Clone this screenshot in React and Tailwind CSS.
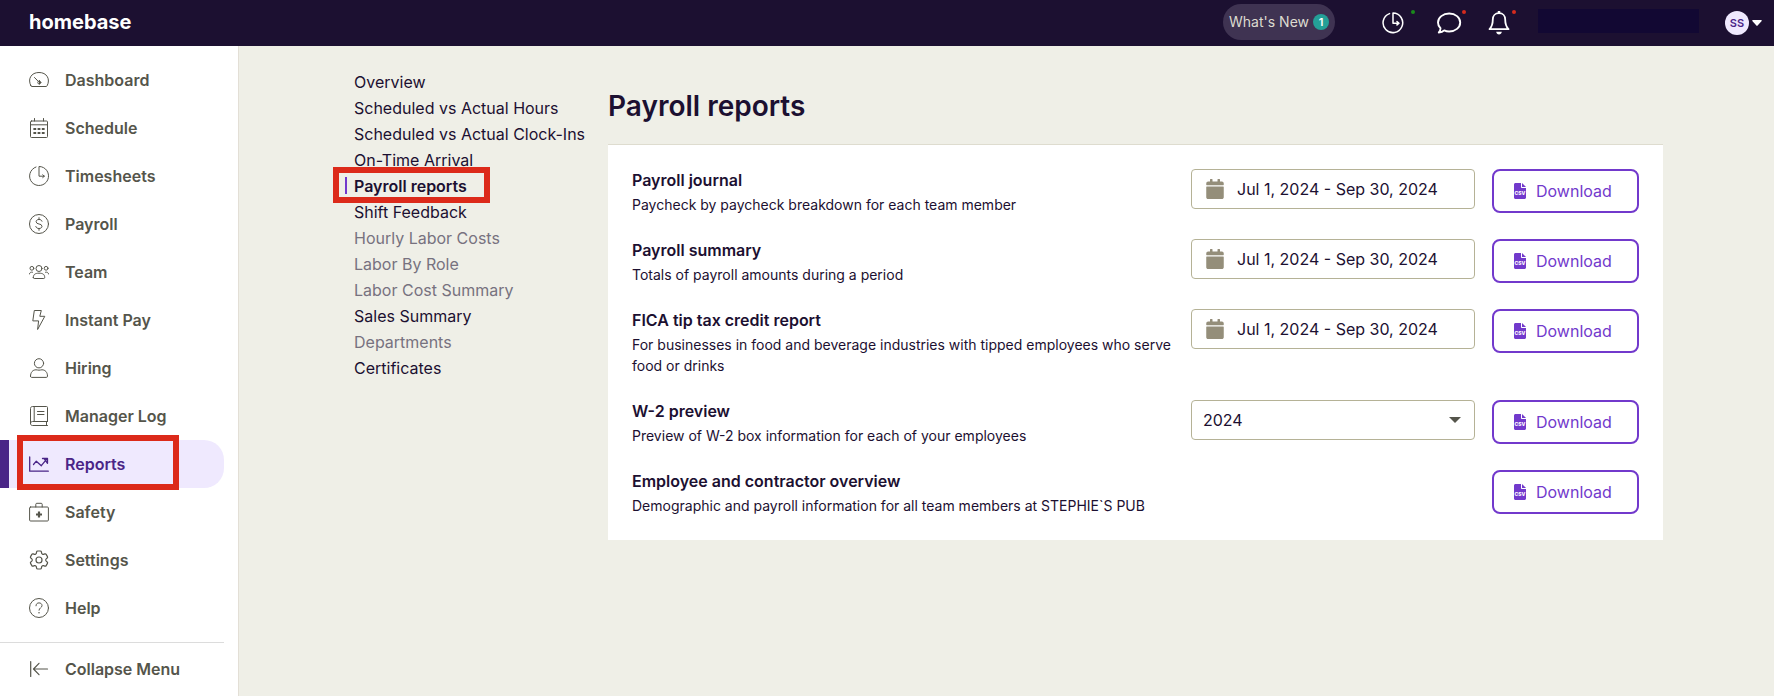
import { useState } from 'react'
import { FaCalendar } from 'react-icons/fa'
import { HiOutlineCog6Tooth } from 'react-icons/hi2'

const svgProps = {
  viewBox: '0 0 20 20',
  fill: 'none',
  stroke: 'currentColor',
  strokeWidth: 1,
  strokeLinecap: 'round',
  strokeLinejoin: 'round',
  'aria-hidden': true,
  className: 'w-5 h-5 shrink-0',
}

const Icons = {
  dashboard: (
    <svg {...svgProps}>
      <path d="M1.9 15.8C.2 12.6.2 9.200 1.600 6.800 3.200 3.900 6.300 2.500 10 2.500s6.800 1.400 8.400 4.300c1.400 2.400 1.400 5.800-.3 9-.3.5-.6.7-1.100.7H3c-.5 0-.8-.2-1.100-.7Z" />
      <circle cx="10.300" cy="12.500" r="1.500" />
      <path d="M5.500 7.500 9.300 11.400M10.500 14v-3.500" />
    </svg>
  ),
  schedule: (
    <svg {...svgProps}>
      <rect x="1.500" y="3" width="17" height="16.500" rx="1" />
      <path d="M1.500 6.800h17M5.500.5V3M14.500.5V3" />
      <path d="M5.500 11h.6M9.700 11h.6M13.900 11h.6M5.500 15h.6M9.700 15h.6M13.900 15h.6" strokeWidth="2.200" strokeLinecap="square" />
    </svg>
  ),
  timesheets: (
    <svg {...svgProps}>
      <path d="M7 1a9.500 9.500 0 1 0 3-.5v9.700h5.200M13.700 8.800l1.700 1.400-1.700 1.400" />
    </svg>
  ),
  payroll: (
    <svg {...svgProps}>
      <circle cx="10" cy="10" r="9.500" />
      <path d="M13 7.200C12.700 6 11.500 5.500 10 5.500c-1.700 0-2.900.8-2.900 2.200C7.100 11 13 9 13 12.300c0 1.400-1.300 2.200-3 2.200s-2.900-.8-3.200-2M10 3.700v1.800M10 14.500v1.800" />
    </svg>
  ),
  team: (
    <svg {...svgProps}>
      <circle cx="10" cy="6.500" r="3" />
      <circle cx="2.900" cy="6.300" r="1.900" />
      <circle cx="17.100" cy="6.300" r="1.900" />
      <path d="M4.300 15.500c0-3 1.700-4.300 5.700-4.300s5.700 1.300 5.700 4.300c0 .6-.3 1-.9 1H5.200c-.6 0-.9-.4-.9-1ZM.4 12c.2-1.600 1.500-2.100 3.100-1.800M19.600 12c-.2-1.600-1.500-2.100-3.100-1.800" />
    </svg>
  ),
  instantPay: (
    <svg {...svgProps}>
      <path d="M5.700.5h6.600l-1.500 5.800h5L8.600 19.500l1-8.600H4.200Z" />
    </svg>
  ),
  hiring: (
    <svg {...svgProps}>
      <circle cx="10" cy="5.300" r="4.600" />
      <path d="M1.500 18.200c0-4 2.300-6.400 5.500-6.400 1.200 0 1.800.4 3 .4s1.800-.4 3-.4c3.200 0 5.500 2.400 5.500 6.400 0 .8-.4 1.200-1.200 1.200H2.700c-.8 0-1.200-.4-1.200-1.200Z" />
    </svg>
  ),
  managerLog: (
    <svg {...svgProps}>
      <path d="M18.500 15.500V1.500c0-.6-.3-1-.9-1H3.500c-1.200 0-2 .8-2 2v15c0 1.200.8 2 2 2h15M18.500 15.500h-15c-1.200 0-2 .8-2 2M5.200.5v15M17.500 15.500v4M8.500 5.500H15M8.500 8.500H15" />
    </svg>
  ),
  reports: (
    <svg {...svgProps} strokeWidth="1.300">
      <path d="M.7 3v14.200h18.600" />
      <path d="M4.500 10.500 7.300 7.200l5 4.500 5.400-6.500M13.500 4.500h5v4.800l-3-4.200" />
    </svg>
  ),
  safety: (
    <svg {...svgProps}>
      <rect x=".6" y="5" width="18.800" height="14" rx="1" />
      <path d="M6.800 5V2.300c0-.6.4-1 1-1h4.400c.6 0 1 .4 1 1V5" />
      <path d="M10 9.500v6M7 12.500h6" strokeWidth="2.200" strokeLinecap="butt" />
    </svg>
  ),
  settings: <HiOutlineCog6Tooth strokeWidth="1.2" viewBox="2 2 20 20" className="w-5 h-5 shrink-0" />,
  help: (
    <svg {...svgProps}>
      <circle cx="10" cy="10" r="9.500" />
      <path d="M7 7.800c0-1.800 1.200-2.900 3-2.900s3 1.100 3 2.700c0 2.200-3 2.200-3 4.600" />
      <path d="M10 14.700v.1" strokeWidth="1.500" />
    </svg>
  ),
  collapse: (
    <svg {...svgProps} strokeWidth="1.200">
      <path d="M1.700 2.500v15M18.500 10H4.500M10 4.300 4.500 10l5.500 5.700" />
    </svg>
  ),
  csv: (
    <svg viewBox="0 0 12 16" fill="currentColor" aria-hidden="true" className="w-3 h-4 shrink-0">
      <path d="M1.500 0H7v4.200c0 .5.300.8.800.8H12v9.500c0 .8-.7 1.500-1.500 1.500h-9C.7 16 0 15.300 0 14.500v-13C0 .7.700 0 1.500 0ZM8 0l4 4H8Z" />
      <text x="6" y="11.500" textAnchor="middle" fontSize="5" fontWeight="800" fill="#fff">CSV</text>
    </svg>
  ),
}

const sidebarItems = [
  { label: 'Dashboard', icon: Icons.dashboard },
  { label: 'Schedule', icon: Icons.schedule },
  { label: 'Timesheets', icon: Icons.timesheets },
  { label: 'Payroll', icon: Icons.payroll },
  { label: 'Team', icon: Icons.team },
  { label: 'Instant Pay', icon: Icons.instantPay },
  { label: 'Hiring', icon: Icons.hiring },
  { label: 'Manager Log', icon: Icons.managerLog },
  { label: 'Reports', icon: Icons.reports, active: true },
  { label: 'Safety', icon: Icons.safety },
  { label: 'Settings', icon: Icons.settings },
  { label: 'Help', icon: Icons.help },
]

const reportLinks = [
  { label: 'Overview' },
  { label: 'Scheduled vs Actual Hours' },
  { label: 'Scheduled vs Actual Clock-Ins' },
  { label: 'On-Time Arrival' },
  { label: 'Payroll reports', active: true },
  { label: 'Shift Feedback' },
  { label: 'Hourly Labor Costs', locked: true },
  { label: 'Labor By Role', locked: true },
  { label: 'Labor Cost Summary', locked: true },
  { label: 'Sales Summary' },
  { label: 'Departments', locked: true },
  { label: 'Certificates' },
]

const reports = [
  {
    title: 'Payroll journal',
    text: 'Paycheck by paycheck breakdown for each team member',
    field: 'range',
  },
  {
    title: 'Payroll summary',
    text: 'Totals of payroll amounts during a period',
    field: 'range',
  },
  {
    title: 'FICA tip tax credit report',
    text: 'For businesses in food and beverage industries with tipped employees who serve food or drinks',
    field: 'range',
  },
  {
    title: 'W-2 preview',
    text: 'Preview of W-2 box information for each of your employees',
    field: 'year',
  },
  {
    title: 'Employee and contractor overview',
    text: 'Demographic and payroll information for all team members at STEPHIE`S PUB',
  },
]

function Header() {
  return (
    <header className="flex items-center h-[46px] pl-[29px] pr-3 bg-[#1c1031] text-white">
      <a href="#" className="pb-[2px] text-xl leading-6 font-bold">homebase</a>
      <button type="button" className="flex items-center gap-1 h-9 ml-auto mb-[2px] px-[6px] rounded-full bg-[#3f3352] text-sm text-[#dddbd0]">
        What's New
        <span className="w-4 h-4 rounded-full bg-[#24a097] text-white text-[11px] leading-4 font-semibold">1</span>
      </button>
      <div className="flex items-center gap-8 ml-[47px]">
        <button type="button" aria-label="Time clock" className="relative">
          <svg viewBox="0 0 22 22" fill="none" stroke="currentColor" strokeWidth="1.500" strokeLinecap="round" strokeLinejoin="round" className="w-[22px] h-[22px]">
            <path d="M7.500 1.600A9.800 9.800 0 1 0 11 1v10.200h5.800M15 9.500l2 1.700-2 1.700" />
          </svg>
          <span className="absolute -top-[2px] -right-[11px] w-1 h-1 rounded-full bg-[#1a8a1c]" />
        </button>
        <button type="button" aria-label="Messages" className="relative">
          <svg viewBox="0 0 26 24" fill="none" stroke="currentColor" strokeWidth="1.900" strokeLinecap="round" strokeLinejoin="round" className="w-[26px] h-6">
            <path d="M4.500 17.300C2.800 15.700 2 13.700 2 11.500 2 6.500 7 2.500 13.200 2.500s11 4 11 9-4.800 9-11 9c-1.900 0-3.500-.4-5-1.100-1.400 1.400-3.200 2-5.400 2.100 1-1 1.700-2.500 1.700-4.200Z" />
          </svg>
          <span className="absolute -top-px -right-1 w-1 h-1 rounded-full bg-[#d52b1e]" />
        </button>
        <button type="button" aria-label="Notifications" className="relative -ml-[6px]">
          <svg viewBox="0 0 22 24" fill="none" stroke="currentColor" strokeWidth="1.800" strokeLinejoin="round" className="w-[22px] h-6">
            <path d="M11 2.200c-4 0-6.200 2.800-6.200 6.300 0 5-.8 7-3.300 9.700h19c-2.500-2.700-3.300-4.700-3.300-9.700 0-3.500-2.200-6.300-6.200-6.300Z" />
            <path d="M11 0v2.500" strokeWidth="2.500" />
            <path d="M8.200 20.800h5.600c-.3 1.700-1.300 2.700-2.800 2.700s-2.500-1-2.800-2.700Z" fill="currentColor" stroke="none" />
          </svg>
          <span className="absolute -top-px -right-[6px] w-1 h-1 rounded-full bg-[#d52b1e]" />
        </button>
      </div>
      <div className="w-[161px] h-6 ml-7 mb-1 bg-[#120833]" />
      <button type="button" className="flex items-center gap-[3px] ml-[26px]">
        <span className="w-6 h-6 rounded-full bg-[#efe9fe] text-[#4a2587] text-[11px] leading-6 font-semibold">SS</span>
        <svg viewBox="0 0 10 6" fill="currentColor" aria-hidden="true" className="w-[10px] h-[6px]">
          <path d="M1 0h8c.7 0 1 .7.5 1.200L5.600 5.600c-.3.4-.9.4-1.200 0L.5 1.200C0 .7.300 0 1 0Z" />
        </svg>
      </button>
    </header>
  )
}

function Sidebar() {
  return (
    <aside className="flex flex-col w-[239px] shrink-0 pt-[10px] pr-[14px] bg-white border-r border-[#e3dfd6] text-[#55554b] font-semibold">
      <nav>
        <ul>
          {sidebarItems.map(({ label, icon, active }) => (
            <li key={label} className="relative">
              <a
                href="#"
                className={
                  active
                    ? 'flex items-center gap-4 h-12 pl-5 border-l-[9px] border-[#4a2587] rounded-r-[20px] bg-[#efe9fe] text-[#4a2587]'
                    : 'flex items-center gap-4 h-12 pl-[29px]'
                }
              >
                {icon}
                {label}
              </a>
              {active && (
                <span className="absolute left-[17px] -top-[5px] w-[162px] h-[55px] border-[6px] border-[#dc2a1a] pointer-events-none" />
              )}
            </li>
          ))}
        </ul>
      </nav>
      <button type="button" className="flex items-center gap-4 h-[52px] mt-[10px] pl-[29px] border-t border-[#dcdcdc]">
        {Icons.collapse}
        Collapse Menu
      </button>
    </aside>
  )
}

function ReportNav() {
  return (
    <nav className="w-[263px] shrink-0 pt-[23px]">
      <ul>
        {reportLinks.map(({ label, active, locked }) => (
          <li key={label} className="relative leading-[26px]">
            <a href="#" className={active ? 'block pl-[9px] font-semibold' : locked ? 'block pl-[9px] text-[#77727f]' : 'block pl-[9px]'}>
              {label}
            </a>
            {active && (
              <>
                <span className="absolute left-0 top-1 w-[2px] h-[17px] bg-[#7239cc]" />
                <span className="absolute -left-3 -top-[6px] w-[157px] h-9 border-[6px] border-[#dc2a1a] pointer-events-none" />
              </>
            )}
          </li>
        ))}
      </ul>
    </nav>
  )
}

function DateRangeField({ label }) {
  const [value, setValue] = useState('Jul 1, 2024 - Sep 30, 2024')

  return (
    <div className="relative w-[284px] shrink-0">
      <FaCalendar className="absolute left-[15px] top-[10px] w-[18px] h-5 text-[#948e7a]" />
      <input
        type="text"
        aria-label={`${label} dates`}
        value={value}
        onChange={(e) => setValue(e.target.value)}
        className="block w-full h-10 pl-[45px] pr-3 border border-[#b5b296] rounded bg-transparent"
      />
    </div>
  )
}

function YearField({ label }) {
  return (
    <div className="relative w-[284px] shrink-0">
      <select aria-label={`${label} year`} defaultValue="2024" className="block w-full h-10 px-[11px] border border-[#b5b296] rounded bg-transparent appearance-none">
        <option>2024</option>
        <option>2023</option>
      </select>
      <svg viewBox="0 0 12 6" fill="currentColor" aria-hidden="true" className="absolute right-[14px] top-[17px] w-3 h-[6px] text-[#55554b] pointer-events-none">
        <path d="M0 0h12L6 6Z" />
      </svg>
    </div>
  )
}

function ReportRow({ title, text, field }) {
  return (
    <li className="flex items-start gap-[17px]">
      <div className="flex-1 min-h-[46px]">
        <h2 className="leading-[22px] font-semibold">{title}</h2>
        <p className="mt-[3px] text-sm leading-[21px]">{text}</p>
      </div>
      {field === 'range' && <DateRangeField label={title} />}
      {field === 'year' && <YearField label={title} />}
      <button type="button" className="flex items-center gap-[10px] w-[147px] h-11 pl-5 border-2 border-[#7239cc] rounded-lg text-[#7239cc]">
        {Icons.csv}
        Download
      </button>
    </li>
  )
}

export default function App() {
  return (
    <div className="flex flex-col min-h-screen bg-[#efefe7] font-[Inter,sans-serif] text-base text-[#1c1031]">
      <Header />
      <div className="flex flex-1">
        <Sidebar />
        <main className="flex-1">
          <div className="flex max-w-[1323px] mx-auto pr-[5px]">
            <ReportNav />
            <section className="flex-1 pt-10">
              <h1 className="text-[28px] leading-10 font-semibold">Payroll reports</h1>
              <ul className="flex flex-col gap-6 mt-[18px] p-6 bg-white border-t border-[#dedccf]">
                {reports.map((report) => (
                  <ReportRow key={report.title} {...report} />
                ))}
              </ul>
            </section>
          </div>
        </main>
      </div>
    </div>
  )
}
